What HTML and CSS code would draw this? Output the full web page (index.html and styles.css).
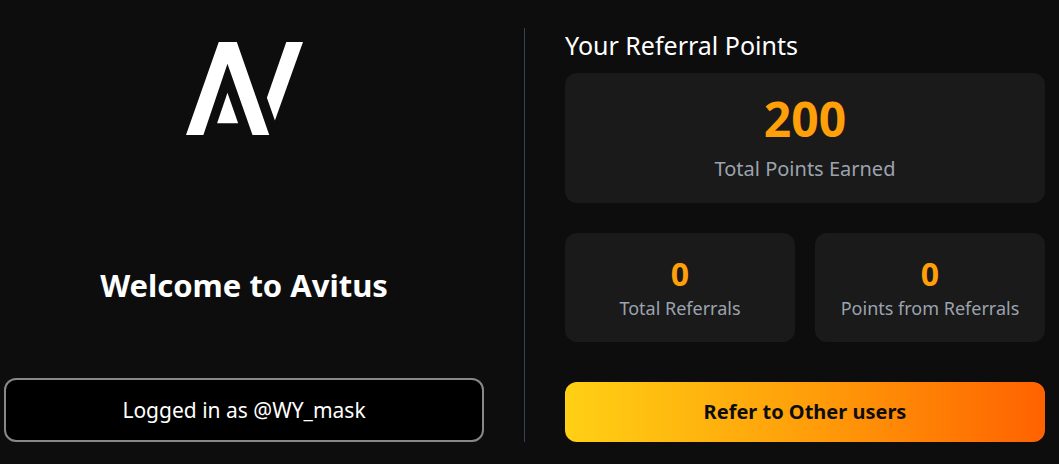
FILE: index.html
```html
<!DOCTYPE html>
<html lang="en">
<head>
    <meta charset="UTF-8">
    <meta name="viewport" content="width=device-width, initial-scale=1.0">
    <title>Avitus Referrals</title>
    <link rel="stylesheet" href="styles.css">
</head>
<body>
    <main class="container">
        <section class="welcome">
            <svg class="logo" viewBox="30 35 350 278" role="img" aria-label="Avitus">
                <path d="M30 313L128 35H182L279 313H229L154 100L82 313Z"/>
                <path d="M154 187L186 278H123Z"/>
                <path d="M330 35H380L296 270L272 202Z"/>
            </svg>
            <h1>Welcome to Avitus</h1>
            <button type="button" class="login-btn">Logged in as @WY_mask</button>
        </section>

        <div class="divider"></div>

        <section class="referrals">
            <h2>Your Referral Points</h2>
            <div class="card total">
                <p class="value">200</p>
                <p class="label">Total Points Earned</p>
            </div>
            <div class="stats">
                <div class="card">
                    <p class="value">0</p>
                    <p class="label">Total Referrals</p>
                </div>
                <div class="card">
                    <p class="value">0</p>
                    <p class="label">Points from Referrals</p>
                </div>
            </div>
            <button type="button" class="refer-btn">Refer to Other users</button>
        </section>
    </main>
</body>
</html>
```
FILE: styles.css
```css
* {
    box-sizing: border-box;
}

body {
    margin: 0;
    background-color: #0d0d0d;
    color: #ffffff;
    font-family: 'Segoe UI', 'Noto Sans', sans-serif;
}

h1, h2, p {
    margin: 0;
}

button {
    width: 100%;
    border-radius: 12px;
    font-family: inherit;
    font-size: 20px;
    line-height: 28px;
    cursor: pointer;
}

.container {
    display: grid;
    grid-template-columns: 1fr 1px 1fr;
    gap: 40px;
    padding: 28px 14px 22px 4px;
}

.welcome {
    display: flex;
    flex-direction: column;
    align-items: center;
    justify-content: space-between;
    padding-top: 14px;
}

.logo {
    width: 117px;
    height: 93px;
    fill: #ffffff;
}

h1 {
    margin-top: 56px;
    font-size: 31px;
    line-height: 40px;
    font-weight: 700;
}

.login-btn {
    padding: 16px;
    border: 2px solid #888888;
    background-color: #000000;
    color: #ffffff;
    font-size: 21px;
}

.divider {
    background-color: #374151;
}

.referrals {
    display: flex;
    flex-direction: column;
}

h2 {
    margin-bottom: 11px;
    font-size: 25px;
    line-height: 34px;
    font-weight: 400;
}

.card {
    padding: 22px 10px 20px;
    border-radius: 12px;
    background-color: #1a1a1a;
    text-align: center;
}

.value {
    color: #ff9f0a;
    font-size: 32px;
    line-height: 38px;
    font-weight: 700;
}

.label {
    margin-top: 1px;
    color: #9ca3af;
    font-size: 18px;
    line-height: 28px;
}

.total .value {
    font-size: 48px;
    line-height: 48px;
}

.total .label {
    margin-top: 12px;
    font-size: 20px;
}

.stats {
    display: grid;
    grid-template-columns: 1fr 1fr;
    gap: 20px;
    margin: 30px 0 40px;
}

.refer-btn {
    padding: 16px;
    border: none;
    background: linear-gradient(to right, #ffd014, #ff9f0a, #ff6200);
    color: #0d0d0d;
    font-weight: 700;
}
```
